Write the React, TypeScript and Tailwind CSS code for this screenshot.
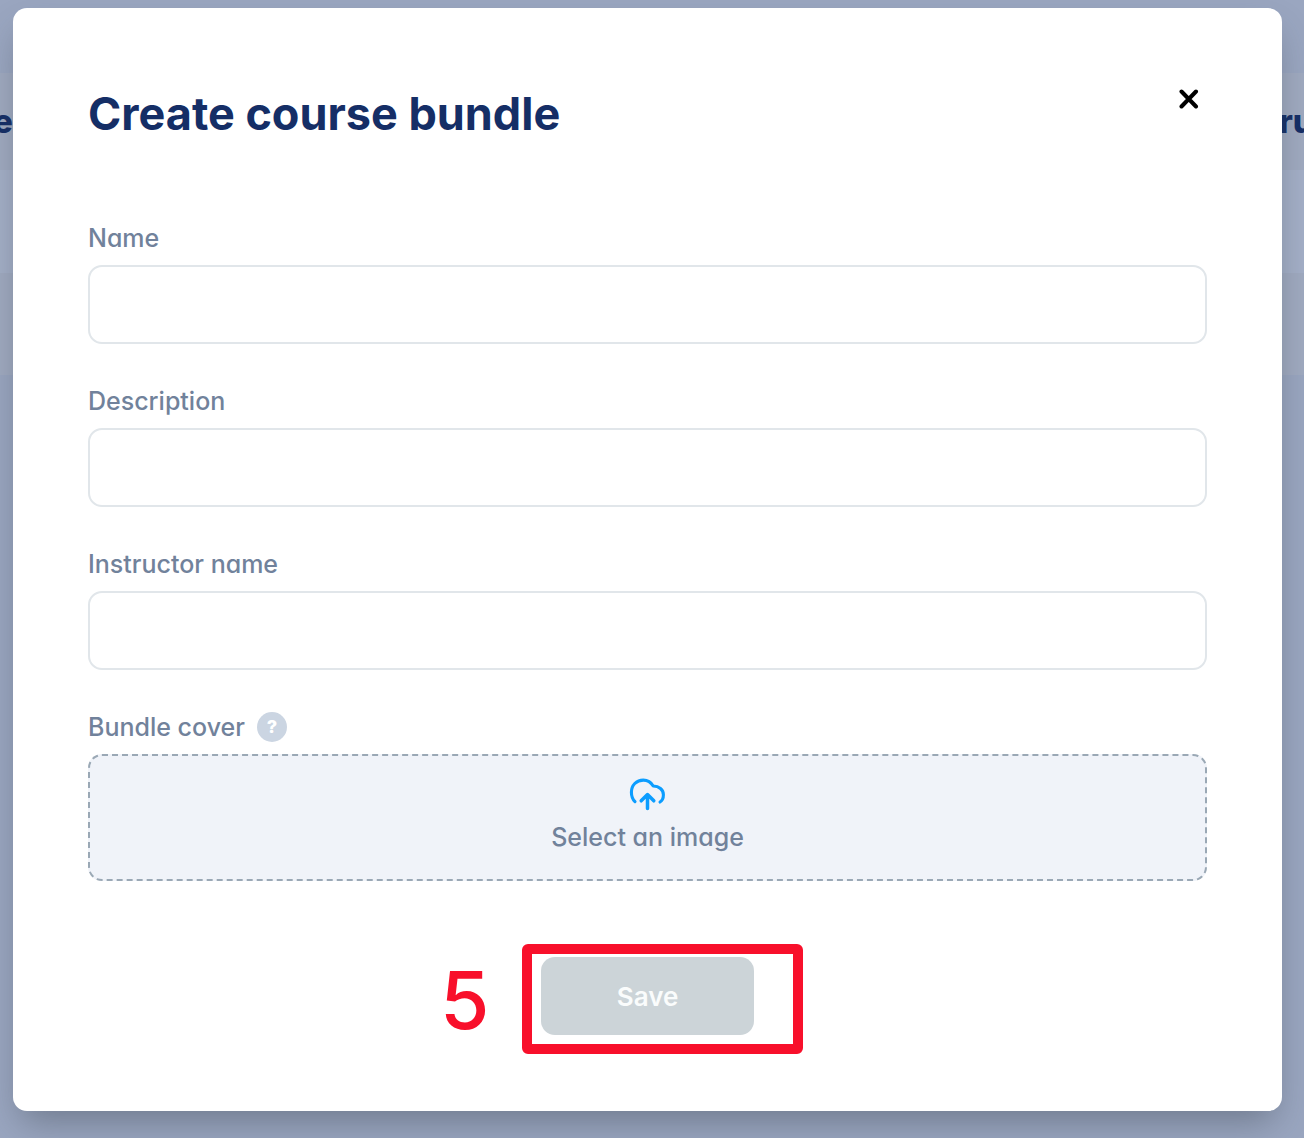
import React from "react";

const fields = [
  { id: "name", label: "Name" },
  { id: "description", label: "Description" },
  { id: "instructor", label: "Instructor name" },
];

const labelText =
  "text-[25px] leading-9 font-medium text-[#71829b] [font-feature-settings:'cv11']";

function Backdrop() {
  return (
    <div
      aria-hidden="true"
      className="absolute inset-0 overflow-hidden bg-[#9aa6c0] text-[33px] font-extrabold text-[#152e66]"
    >
      <div className="h-[73px]" />
      <div className="flex h-[97px] items-center justify-between bg-[#a0aac0]">
        <span className="-ml-[7px]">e</span>
        <span className="w-[25px] whitespace-nowrap">ru</span>
      </div>
      <div className="h-[103px] bg-[#a4afc7]" />
      <div className="h-[102px] bg-[#a0aac0]" />
    </div>
  );
}

function CloudUpload() {
  return (
    <svg
      width="37"
      height="34"
      viewBox="0 0 37 34"
      fill="none"
      stroke="#0c9dff"
      strokeWidth="3.1"
      strokeLinecap="round"
      strokeLinejoin="round"
      aria-hidden="true"
    >
      <path d="M6 24.7C3.6 22.3 2.4 19.5 2.4 15.2C2.4 8.2 7.5 3.1 14.3 3.1C18.8 3.1 22.1 5.3 24.2 9C30 9.1 34.4 12.5 34.4 17.8C34.4 20.8 33.4 23.6 31 25" />
      <path d="M18.5 31.5V18M12.2 23.8L18.5 17.5L24.8 23.8" strokeWidth="3.5" />
    </svg>
  );
}

export default function App() {
  return (
    <main className="relative min-h-screen pt-2 pr-[22px] pb-[27px] pl-[13px] font-[Inter,sans-serif]">
      <Backdrop />
      <form
        role="dialog"
        aria-labelledby="dialog-title"
        onSubmit={(e) => e.preventDefault()}
        className="relative rounded-[14px] bg-white px-[75px] py-[76px] shadow-[0_18px_36px_-8px_rgba(50,60,70,0.42)]"
      >
        <header className="flex items-start justify-between">
          <h1
            id="dialog-title"
            className="text-[45px] leading-[59px] font-bold text-[#152e66]"
          >
            Create course bundle
          </h1>
          <button
            type="button"
            aria-label="Close"
            className="flex h-[30px] w-9 items-center justify-center"
          >
            <svg width="20" height="20" viewBox="0 0 20 20" stroke="#000" strokeWidth="4" strokeLinecap="round">
              <path d="M2.5 2.5L17 17.500M17 2.5L2.5 17.500" />
            </svg>
          </button>
        </header>

        <div className="mt-[77px] flex flex-col gap-[39px]">
          {fields.map((f) => (
            <div key={f.id} className="flex flex-col gap-[9px]">
              <label htmlFor={f.id} className={labelText}>
                {f.label}
              </label>
              <input
                id={f.id}
                type="text"
                className="h-[79px] w-full rounded-[14px] border-2 border-[#e1e6ea] bg-white px-6 text-[25px] outline-none"
              />
            </div>
          ))}

          <div className="flex flex-col gap-[9px]">
            <div className="flex h-9 items-center gap-3">
              <span id="cover-label" className={labelText}>
                Bundle cover
              </span>
              <button
                type="button"
                aria-label="Help"
                className="flex size-[30px] items-center justify-center rounded-full bg-[#cbd5e2] text-lg font-extrabold text-white"
              >
                ?
              </button>
            </div>
            <button
              type="button"
              aria-describedby="cover-label"
              className="flex h-[127px] w-full flex-col items-center rounded-[14px] border-2 border-dashed border-[#9aa8b5] bg-[#f0f3f9] pt-[21px]"
            >
              <CloudUpload />
              <span className={`${labelText} mt-2`}>Select an image</span>
            </button>
          </div>
        </div>

        <div className="relative mx-auto mt-[76px] w-[213px]">
          <button
            type="submit"
            className="h-[78px] w-full rounded-[14px] bg-[#ccd4d8] text-[26px] font-semibold text-[#fafcfc]"
          >
            Save
          </button>
          <div className="pointer-events-none absolute -top-[13px] -right-[49px] -bottom-[19px] -left-[19px] rounded-md border-[10px] border-[#f8102b]" />
          <span className="pointer-events-none absolute top-0 -left-[101px] text-[80px] leading-[85px] font-medium text-[#f8102b]">
            5
          </span>
        </div>
      </form>
    </main>
  );
}
